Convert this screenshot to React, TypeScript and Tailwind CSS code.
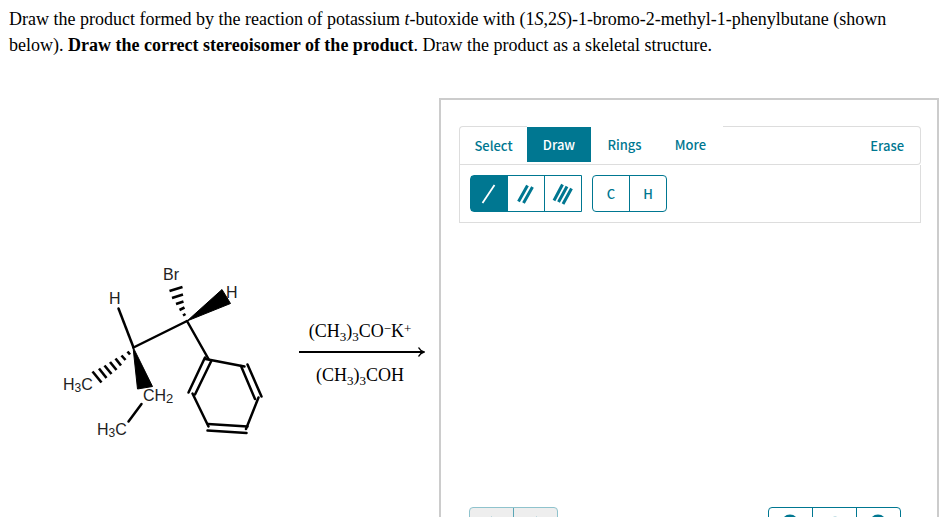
import type { ReactNode } from 'react';
import clsx from 'clsx';

type Line = [number, number, number, number];

const bonds: Line[] = [
  [58.5, 46.5, 73.5, 85.5],
  [73.5, 85.5, 127, 59],
  [127, 59, 148.5, 97],
  [81.5, 142, 68.5, 159.5],
  // phenyl ring
  [145, 95.5, 128.5, 130.5],
  [151.5, 98.5, 135, 132.5],
  [145.5, 97, 184.5, 104.5],
  [187.5, 102.5, 201.5, 134.5],
  [181, 104, 195, 137],
  [198.5, 135.5, 186, 167],
  [187.5, 164.5, 148, 162],
  [186.5, 171, 147.5, 168.5],
  [148.5, 164.5, 132.5, 131.5],
];

const hashes: Line[] = [
  // C1 to Br
  [109.5, 29, 122.5, 25],
  [112, 36, 123, 32.5],
  [116, 42, 123.5, 39.5],
  [119.5, 48, 124.5, 45.5],
  [123, 53.5, 125.5, 52],
  // C2 to CH3
  [32.5, 109.5, 41.5, 120.5],
  [39, 106.5, 46.5, 116],
  [44.5, 103.5, 51.5, 112],
  [50, 100, 56.5, 108],
  [55.5, 96.5, 61, 103.5],
  [61.5, 93.5, 65.5, 98],
  [67.5, 89.5, 70, 92.5],
];

const Molecule = () => (
  <svg
    viewBox="0 0 210 180"
    className="w-[210px] h-[180px] shrink-0 font-['Liberation_Sans',sans-serif]"
    role="img"
    aria-label="(1S,2S)-1-bromo-2-methyl-1-phenylbutane"
  >
    <g stroke="#000" strokeWidth="2.5" strokeLinecap="round">
      {bonds.map(([x1, y1, x2, y2], i) => (
        <line key={i} x1={x1} y1={y1} x2={x2} y2={y2} />
      ))}
    </g>
    <g stroke="#000" strokeWidth="2.6">
      {hashes.map(([x1, y1, x2, y2], i) => (
        <line key={i} x1={x1} y1={y1} x2={x2} y2={y2} />
      ))}
    </g>
    <g stroke="#000" strokeLinejoin="round">
      <polygon points="127,59 162,27.5 170.5,41.5" />
      <polygon points="73,85 77.5,127 92.5,124.5" />
    </g>
    <g fill="#222" fontSize="16">
      <text x="103" y="18">Br</text>
      <text x="49" y="42">H</text>
      <text x="166" y="36">H</text>
      <text x="3" y="128">
        H<tspan fontSize="12" dy="2">3</tspan><tspan dy="-2">C</tspan>
      </text>
      <text x="83" y="139">
        CH<tspan fontSize="13" dy="2">2</tspan>
      </text>
      <text x="37" y="173">
        H<tspan fontSize="12" dy="2">3</tspan><tspan dy="-2">C</tspan>
      </text>
    </g>
  </svg>
);

const Sub = ({ children }: { children: ReactNode }) => (
  <sub className="text-[13px] -bottom-1">{children}</sub>
);

const Conditions = () => (
  <div className="w-[126px] shrink-0 pt-0.5 text-center text-lg leading-6">
    <p className="pr-1 whitespace-nowrap">
      (CH<Sub>3</Sub>)<Sub>3</Sub>CO<sup className="text-[13px] -top-1">−</sup>K
      <sup className="text-[13px] -top-1">+</sup>
    </p>
    <svg viewBox="0 0 126 12" className="mt-[3px] mb-[5px] h-3 w-full" fill="none" stroke="#000" aria-hidden="true">
      <path d="M0 6H124" strokeWidth="2" />
      <path d="M119.500 1.500Q121.500 5 125 6Q121.500 7 119.500 10.500" strokeWidth="1.500" />
    </svg>
    <p className="pr-1 whitespace-nowrap">
      (CH<Sub>3</Sub>)<Sub>3</Sub>COH
    </p>
  </div>
);

const BondIcon = ({ count }: { count: number }) => (
  <svg viewBox="0 0 24 24" className="size-6" stroke="currentColor" aria-hidden="true">
    {count === 1 && <path d="M5.500 21L17.500 3" strokeWidth="1.800" />}
    {count === 2 && <path d="M4.500 19.500L13.500 3.500M9.500 21L18.500 5" strokeWidth="3" />}
    {count === 3 && <path d="M3 18.500L11.500 2.500M7.500 20L16 4.500M12 22L20.500 6.500" strokeWidth="3" />}
  </svg>
);

const tabBase = 'flex h-[35px] items-center justify-center text-[#007791] cursor-pointer';

const Toolbar = () => (
  <div>
    <div className="flex h-[39px] text-[13px] font-medium" role="tablist">
      <div className="w-[68px] rounded-tl border-t border-l border-b border-[#ddd]">
        <button role="tab" aria-selected="false" className={clsx(tabBase, 'w-full pt-0.5')}>
          Select
        </button>
      </div>
      <div className="flex border-b border-[#ddd] pt-px">
        <button role="tab" aria-selected="true" className="h-[35px] w-16 cursor-pointer bg-[#007791] text-white">
          Draw
        </button>
        <button role="tab" aria-selected="false" className={clsx(tabBase, 'w-[67px]')}>
          Rings
        </button>
        <button role="tab" aria-selected="false" className={clsx(tabBase, 'w-[65px]')}>
          More
        </button>
      </div>
      <div className="flex flex-1 justify-end rounded-r border-t border-r border-b border-[#ddd] pr-4">
        <button className={clsx(tabBase, 'pt-0.5')}>Erase</button>
      </div>
    </div>
    <div className="flex gap-[10px] border-x border-b border-[#ddd] p-[10px]">
      <div className="flex h-[37px] divide-x divide-[#007791] rounded-l border border-[#007791] text-[#007791]">
        <button aria-label="Single bond" className="grid w-[37px] place-items-center bg-[#007791] text-white">
          <BondIcon count={1} />
        </button>
        <button aria-label="Double bond" className="grid w-[37px] place-items-center">
          <BondIcon count={2} />
        </button>
        <button aria-label="Triple bond" className="grid w-9 place-items-center">
          <BondIcon count={3} />
        </button>
      </div>
      <div className="flex h-[37px] divide-x divide-[#007791] rounded border border-[#007791] text-[13px] font-medium text-[#007791]">
        <button className="w-[37px]">C</button>
        <button className="w-9">H</button>
      </div>
    </div>
  </div>
);

const CanvasControls = () => (
  <div className="flex items-center justify-between pr-5 pl-[10px]">
    <div className="flex h-[37px] divide-x divide-[#5aa6b6] rounded border border-[#8fc3cd] bg-[#eee] text-[#8fc3cd]">
      <button disabled aria-label="Undo" className="grid w-11 place-items-center">
        <svg viewBox="0 0 20 20" className="size-5" fill="currentColor" aria-hidden="true">
          <path d="M10 0v5c6 1 8 5 8 12c-2-4-4-5-8-5v5L2 8z" />
        </svg>
      </button>
      <button disabled aria-label="Redo" className="grid w-[43px] place-items-center">
        <svg viewBox="0 0 20 20" className="size-5" fill="currentColor" aria-hidden="true">
          <path d="M10 0v5c-6 1-8 5-8 12c2-4 4-5 8-5v5l8-9z" />
        </svg>
      </button>
    </div>
    <div className="flex h-[37px] divide-x divide-[#007791] rounded border border-[#007791] text-[#007791]">
      <button aria-label="Zoom in" className="grid w-11 place-items-center">
        <svg viewBox="0 0 24 24" className="size-6" fill="none" stroke="currentColor" strokeWidth="3" aria-hidden="true">
          <path d="M16 14l6 7M8 9h6M11 6v6" />
          <circle cx="11" cy="9" r="7" />
        </svg>
      </button>
      <button aria-label="Reset view" className="grid w-11 place-items-center">
        <svg viewBox="0 0 24 24" className="size-6" fill="none" stroke="currentColor" strokeWidth="3" aria-hidden="true">
          <path d="M18.500 7.500A8 8 0 1 0 20 13M20 4v5h-5" />
        </svg>
      </button>
      <button aria-label="Zoom out" className="grid w-[43px] place-items-center">
        <svg viewBox="0 0 24 24" className="size-6" fill="none" stroke="currentColor" strokeWidth="3" aria-hidden="true">
          <path d="M16 14l6 7M8 9h6" />
          <circle cx="11" cy="9" r="7" />
        </svg>
      </button>
    </div>
  </div>
);

const App = () => {
  return (
    <main className="bg-white px-2 pt-1.5 font-['Liberation_Serif',serif] text-black">
      <p className="pl-px text-lg leading-[26px]">
        Draw the product formed by the reaction of potassium <i>t</i>-butoxide with (1<i>S</i>,2<i>S</i>
        )-1-bromo-2-methyl-1-phenylbutane (shown below). <b>Draw the correct stereoisomer of the product</b>. Draw the
        product as a skeletal structure.
      </p>
      <div className="mt-10 flex items-center">
        <div className="flex w-[431px] shrink-0 items-center gap-[29px] pl-[52px]">
          <Molecule />
          <Conditions />
        </div>
        <section
          aria-label="Structure editor"
          className="flex min-h-[508px] flex-1 flex-col border-2 border-[#ccc] pt-[26px] pr-4 pl-[18px] font-['Noto_Sans_CJK_SC',sans-serif]"
        >
          <Toolbar />
          <div className="h-[284px]" />
          <CanvasControls />
        </section>
      </div>
    </main>
  );
};

export default App;
